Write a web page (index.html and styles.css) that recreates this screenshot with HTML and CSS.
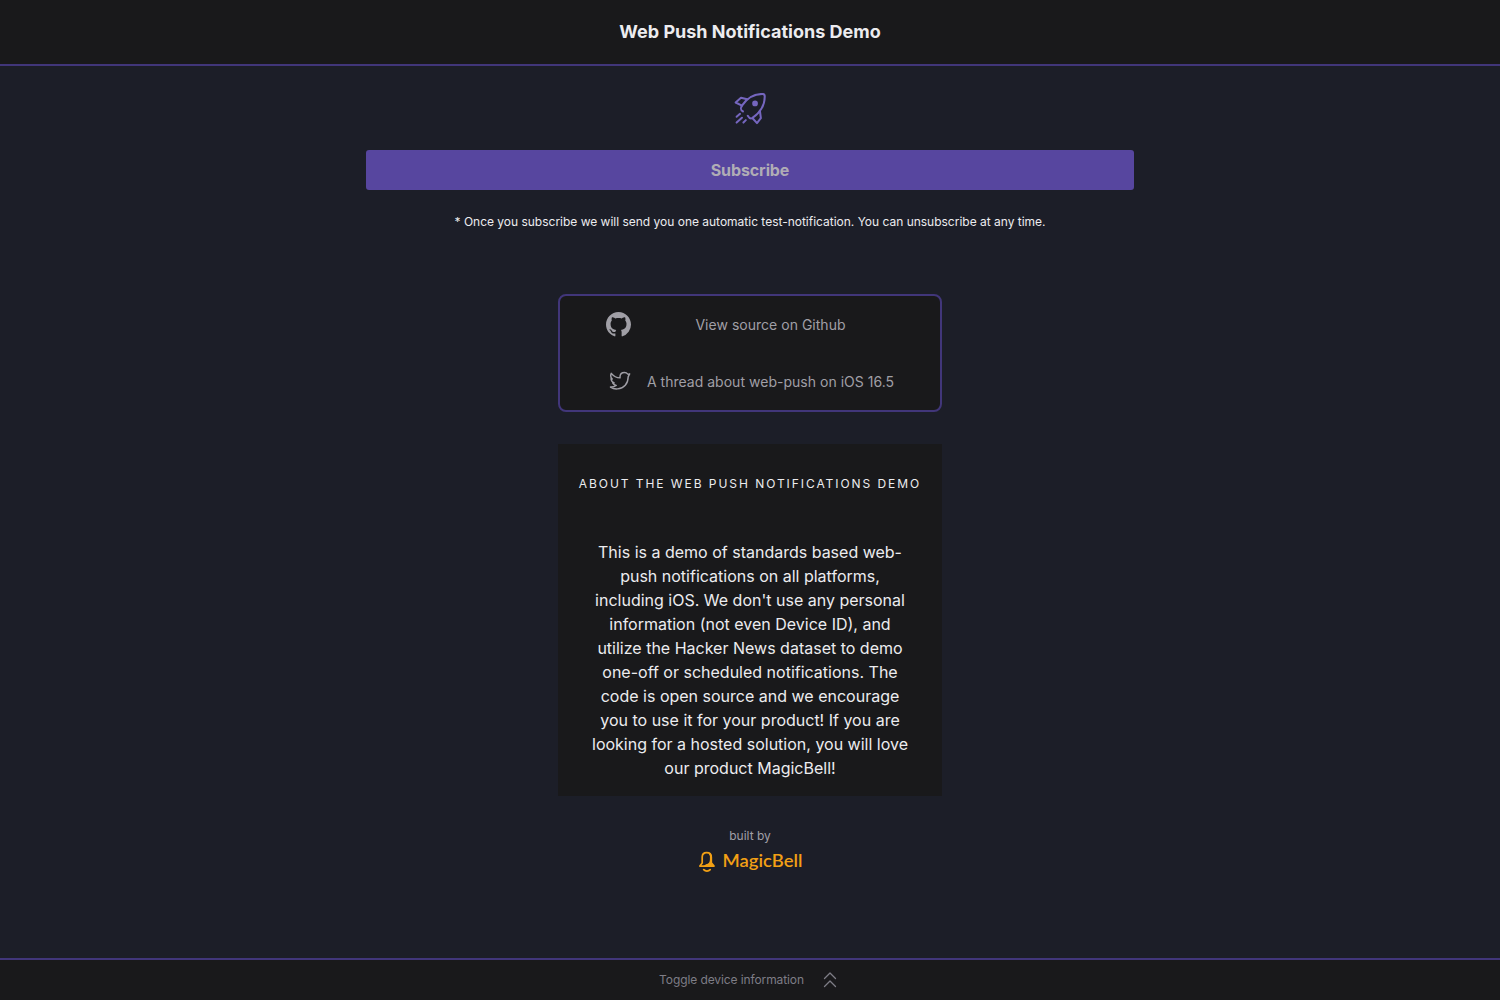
FILE: index.html
```html
<!DOCTYPE html>
<html lang="en">
<head>
<meta charset="utf-8">
<title>Web Push Notifications Demo</title>
<link rel="stylesheet" href="styles.css">
</head>
<body>
<header class="header"><h1>Web Push Notifications Demo</h1></header>
<main class="main">
  <svg class="rocket" viewBox="-0.7 0 33 33" fill="none" stroke="currentColor" stroke-width="2.100" stroke-linecap="round" stroke-linejoin="round">
    <path d="M8.500 19c-3-2-2.500-3.500-1-6C11.500 7 18 1 28.500 1c1.700 0 2.500.8 2.500 2.500C31 14 24.500 21.500 18 26c-1.500.8-3 0-4.500-2.500"/>
    <path d="M13 6.500 6.500 5 1 9.800l6.500 3.200"/>
    <path d="M18.500 26 23 31l4-5-1-7.500"/>
    <path d="M5.500 21.500 2 24.500M7.500 25.500 2 30.500M11.500 28l-2.500 2.500"/>
    <circle cx="21" cy="10.800" r="1.900" fill="currentColor"/>
  </svg>
  <button class="subscribe">Subscribe</button>
  <p class="note">* Once you subscribe we will send you one automatic test-notification. You can unsubscribe at any time.</p>
  <nav class="links">
    <svg class="github" viewBox="0 0 16 16" fill="currentColor"><path d="M8 0C3.580 0 0 3.580 0 8c0 3.540 2.290 6.530 5.470 7.590.4.070.55-.17.55-.38 0-.19-.01-.82-.01-1.490-2.010.37-2.530-.49-2.690-.94-.09-.23-.48-.94-.82-1.130-.28-.15-.68-.52-.01-.53.63-.01 1.080.58 1.230.82.72 1.210 1.870.87 2.330.66.07-.52.28-.87.51-1.070-1.780-.2-3.640-.89-3.640-3.950 0-.87.31-1.590.82-2.150-.08-.2-.36-1.020.08-2.120 0 0 .67-.21 2.200.82.64-.18 1.320-.27 2-.27s1.360.09 2 .27c1.530-1.040 2.200-.82 2.200-.82.44 1.100.16 1.920.08 2.120.51.56.82 1.270.82 2.150 0 3.070-1.870 3.750-3.650 3.950.29.25.54.73.54 1.480 0 1.070-.01 1.930-.01 2.200 0 .21.15.46.55.38A8.010 8.010 0 0 0 16 8c0-4.420-3.580-8-8-8z"/></svg>
    <a>View source on Github</a>
    <svg class="twitter" viewBox="0 0 24 24" fill="none" stroke="currentColor" stroke-width="1.600" stroke-linejoin="round" stroke-linecap="round"><path d="M22.500 4.200c-.7.300-1.300.4-2 .3C19.500 3.200 18.300 2.700 16.900 2.700c-2.900 0-4.900 2.100-4.900 4.900v1C8.200 8.600 5 6.800 2.500 3.700c-1 2.200-.7 4.600 1 6.200L2.200 9.500c.2 2.200 1.400 3.800 3.400 4.600H4c.8 1.500 2.100 2.500 3.900 2.800-1.800 1.300-3.900 1.900-6.300 1.700C4 20.200 6.700 20.900 9.300 20.600c7-.5 11.600-6 11.600-13.100z"/></svg>
    <a>A thread about web-push on iOS 16.5</a>
  </nav>
  <section class="about">
    <h2>About the web push notifications demo</h2>
    <p>This is a demo of standards based web-<br>push notifications on all platforms,<br>including iOS. We don't use any personal<br>information (not even Device ID), and<br>utilize the Hacker News dataset to demo<br>one-off or scheduled notifications. The<br>code is open source and we encourage<br>you to use it for your product! If you are<br>looking for a hosted solution, you will love<br>our product MagicBell!</p>
  </section>
  <p class="built">built by</p>
  <svg class="brand" viewBox="0 0 104 22">
    <path d="M.9 15.100H15L12.500 12M.9 15.100 3.200 12V6c0-2.600 1.900-4.300 4.500-4.300S12.300 3.400 12.300 6v6M4.700 18.600c1.700 1.900 4.800 1.900 6.500 0" fill="none" stroke="currentColor" stroke-width="1.700" stroke-linecap="round" stroke-linejoin="round"/>
    <path d="M9.500 2.500 12.800 4v8l2.500 3.500H4l3-2.300c2.800-.5 3.900-2 3.900-4.700V5z" fill="currentColor"/>
    <text x="23.500" y="15.800" textLength="80" lengthAdjust="spacingAndGlyphs">MagicBell</text>
  </svg>
</main>
<footer class="footer">
  <span>Toggle device information</span>
  <svg class="chevrons" viewBox="0 0 14 16" fill="none" stroke="currentColor" stroke-width="1.300" stroke-linecap="round" stroke-linejoin="round"><path d="m1.500 6.500 5.500-5.500 5.500 5.500M1.500 14.500l5.500-5.500 5.500 5.500"/></svg>
</footer>
</body>
</html>
```
FILE: styles.css
```css
* { box-sizing: border-box; margin: 0; }
body {
  height: 100vh;
  display: flex;
  flex-direction: column;
  overflow: hidden;
  background: #1c1e28;
  color: #ececef;
  font-family: Inter, "Liberation Sans", sans-serif;
}
.header {
  height: 66px;
  flex: none;
  padding-top: 18px;
  background: #19191b;
  border-bottom: 2px solid #41367a;
  text-align: center;
}
.header h1 { font-size: 18px; line-height: 28px; font-weight: 700; }
.main { flex: 1; display: flex; flex-direction: column; align-items: center; }
.rocket { width: 32px; height: 32px; margin-top: 27px; color: #7566bf; flex: none; }
.subscribe {
  width: 768px;
  height: 40px;
  margin-top: 25px;
  border: 0;
  border-radius: 3px;
  background: #57469f;
  color: #b0adb5;
  font: 700 16px/24px Inter, "Liberation Sans", sans-serif;
  letter-spacing: -0.1px;
}
.note { margin-top: 24px; font-size: 12px; line-height: 16px; letter-spacing: -0.01px; }
.links {
  width: 384px;
  height: 118px;
  margin-top: 64px;
  padding: 0 45px;
  display: grid;
  grid-template-columns: 27px 249px;
  grid-template-rows: 57px 57px;
  column-gap: 14px;
  align-items: center;
  justify-items: center;
  background: #19191b;
  border: 2px solid #41367a;
  border-radius: 8px;
  color: #a09fa6;
  font-size: 14px;
  line-height: 20px;
  letter-spacing: 0.02px;
  white-space: nowrap;
}
.github { width: 25px; height: 25px; }
.twitter { width: 22px; height: 22px; margin: 0 0 1px 2px; }
.about {
  width: 384px;
  height: 352px;
  margin-top: 32px;
  padding-top: 32px;
  background: #19191b;
  text-align: center;
}
.about h2 {
  font-size: 12px;
  line-height: 16px;
  font-weight: 400;
  letter-spacing: 1.94px;
  text-transform: uppercase;
  white-space: nowrap;
}
.about p { margin-top: 48px; font-size: 16px; line-height: 24px; }
.built { margin-top: 32px; font-size: 12px; line-height: 16px; color: #a09fa6; }
.brand { width: 104px; height: 22px; margin: 7px 0 0 2px; color: #f2a015; }
.brand text { font: 600 17px Lato, sans-serif; fill: currentColor; }
.footer {
  height: 42px;
  flex: none;
  display: flex;
  justify-content: center;
  align-items: center;
  gap: 19px;
  padding: 0 4px 1px 0;
  background: #19191b;
  border-top: 2px solid #41367a;
  color: #7e7d86;
  font-size: 12px;
  letter-spacing: -0.1px;
}
.chevrons { width: 14px; height: 16px; }
```
